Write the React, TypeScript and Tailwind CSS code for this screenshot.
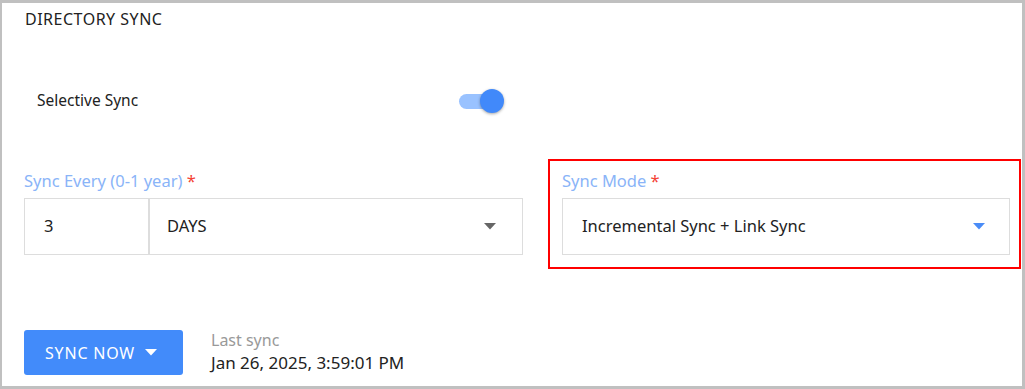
import React from "react";

const font = { fontFamily: '"Noto Sans", "Open Sans", sans-serif' };

function Caret({ color }: { color: string }) {
  return (
    <svg width="12" height="7" viewBox="0 0 12 7" className="shrink-0">
      <path d="M0 0 L12 0 L6 6.5 Z" fill={color} />
    </svg>
  );
}

export default function App() {
  return (
    <div className="w-[1025px] h-[389px] bg-[#c0c0c0] pt-[3px] pl-[2px] pr-[3px] pb-[3px]" style={font}>
      <div className="w-full h-full bg-white flex flex-col">
        <div className="pl-[23px] pt-[5px] h-[22px] text-[16px] leading-[22px] tracking-[0.5px] text-[#222] whitespace-nowrap">DIRECTORY SYNC</div>
        <div className="flex items-center h-[24px] mt-[64px] pl-[35px] w-[502px] justify-between">
          <span className="text-[15.5px] text-[#222]">Selective Sync</span>
          <div className="relative w-[46px] h-[24px] flex items-center">
            <div className="ml-[1px] w-[36px] h-[15px] rounded-full bg-[#99c2ff]" />
            <div className="absolute right-0 top-0 w-[24px] h-[24px] rounded-full bg-[#4189fa] shadow-[0_1px_3px_rgba(0,0,0,0.35)]" />
          </div>
        </div>
        <div className="flex mt-[60px] pl-[22px] items-start">
          <div className="w-[499px] flex flex-col">
            <div className="h-[25px] text-[16.5px] leading-[16px] text-[#8ab4f8] whitespace-nowrap">
              Sync Every (0-1 year) <span className="text-[#f44336]">*</span>
            </div>
            <div className="h-[57px] border border-[#dddddd] flex">
              <div className="w-[125px] border-r-2 border-[#dddddd] flex items-center pl-[19px] text-[16.5px] text-[#222]">3</div>
              <div className="flex-1 flex items-center justify-between pl-[17px] pr-[26px] text-[16.5px] text-[#222]">
                <span>DAYS</span>
                <Caret color="#666666" />
              </div>
            </div>
          </div>
          <div className="ml-[25px] w-[473px] h-[110px] -mt-[14px] border-2 border-[#ff0000] pl-[12px] pr-[9px] pt-[12px] flex flex-col">
            <div className="h-[25px] text-[16.5px] leading-[16px] text-[#8ab4f8] whitespace-nowrap">
              Sync Mode <span className="text-[#f44336]">*</span>
            </div>
            <div className="h-[57px] border border-[#dddddd] flex items-center justify-between pl-[19px] pr-[24px] text-[16.5px] text-[#222]">
              <span>Incremental Sync + Link Sync</span>
              <Caret color="#4a8cf7" />
            </div>
          </div>
        </div>
        <div className="flex mt-[61px] pl-[22px] items-start">
          <div className="w-[159px] h-[45px] rounded-[3px] bg-[#428bfa] flex items-center pl-[21px] gap-[10px] text-white text-[16px] tracking-[0.8px]">
            <span>SYNC NOW</span>
            <Caret color="#ffffff" />
          </div>
          <div className="ml-[28px] flex flex-col">
            <span className="text-[16px] leading-[20px] text-[#999]">Last sync</span>
            <span className="text-[17px] leading-[22px] text-[#222] mt-[2px]">Jan 26, 2025, 3:59:01 PM</span>
          </div>
        </div>
      </div>
    </div>
  );
}
